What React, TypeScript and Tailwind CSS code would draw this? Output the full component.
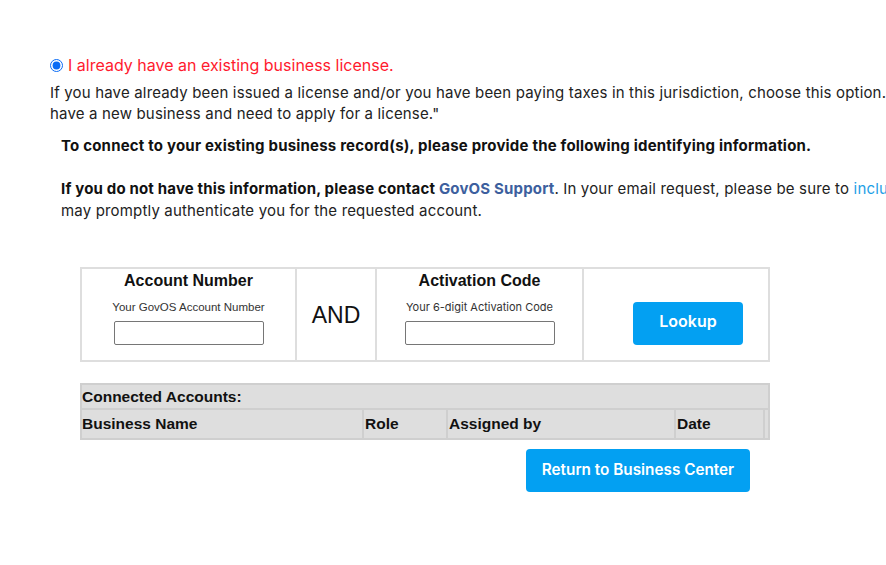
import React from 'react';

const inter = { fontFamily: 'Inter, "Noto Sans", sans-serif' };
const arial = { fontFamily: '"Liberation Sans", Arial, sans-serif' };

export default function App() {
  return (
    <div className="w-[886px] h-[565px] overflow-hidden bg-white text-[#222]" style={inter}>
      <div className="w-[1200px] pt-[55px] pl-[50px]">
        {/* Option radio */}
        <label className="flex items-center gap-[5px] text-[16px] leading-[20px] text-[#ff1a2e]">
          <input type="radio" defaultChecked className="w-[13px] h-[13px] m-0 accent-[#0a6cf5]" />
          <span>I already have an existing business license.</span>
        </label>
        <p className="mt-[7px] text-[15px] leading-[21px] tracking-[0.17px] text-[#222] whitespace-nowrap">
          If you have already been issued a license and/or you have been paying taxes in this jurisdiction, choose this option. If you
          <br />
          have a new business and need to apply for a license."
        </p>

        <div className="pl-[11px] mt-[11px]">
          <p className="text-[15px] leading-[21px] tracking-[0.2px] font-bold text-[#111]">
            To connect to your existing business record(s), please provide the following identifying information.
          </p>
          <p className="mt-[22px] text-[15px] leading-[22px] tracking-[0.17px] text-[#222] whitespace-nowrap">
            <span className="font-bold text-[#111]">If you do not have this information, please contact </span>
            <a className="font-bold text-[#3d5f9e]">GovOS Support</a>. In your email request, please be sure to{' '}
            <a className="text-[#1ea0e6]">include your business name and address</a> so that we
            <br />
            may promptly authenticate you for the requested account.
          </p>
        </div>

        {/* Lookup table */}
        <div className="ml-[30px] mt-[45px] w-[690px] flex border-2 border-[#dedede] h-[95px]">
          <div className="w-[215px] flex flex-col items-center pt-[3px] border-r-2 border-[#dedede]">
            <div className="text-[16px] leading-[18px] font-bold text-[#111]" style={arial}>Account Number</div>
            <div className="mt-[10px] text-[11.5px] leading-[14px] text-[#333]" style={arial}>Your GovOS Account Number</div>
            <input className="mt-[7px] w-[150px] h-[24px] border border-[#767676] rounded-[2px]" />
          </div>
          <div className="w-[80px] flex items-center justify-center border-r-2 border-[#dedede] text-[23px] text-[#111] pt-[2px]" style={arial}>
            AND
          </div>
          <div className="w-[207px] flex flex-col items-center pt-[3px] border-r-2 border-[#dedede]">
            <div className="text-[16px] leading-[18px] font-bold text-[#111]" style={arial}>Activation Code</div>
            <div className="mt-[10px] text-[11px] leading-[14px] text-[#333]">Your 6-digit Activation Code</div>
            <input className="mt-[7px] w-[150px] h-[24px] border border-[#767676] rounded-[2px]" />
          </div>
          <div className="flex-1 flex items-center justify-center pt-[18px] pl-[24px]">
            <button className="w-[110px] h-[43px] pb-[6px] rounded-[4px] bg-[#03a0f2] text-white text-[16px] font-semibold">
              Lookup
            </button>
          </div>
        </div>

        {/* Connected accounts */}
        <div className="ml-[30px] mt-[21px] w-[690px] border-2 border-[#cfcfcf] bg-[#dedede] text-[15.5px] font-bold text-[#111]" style={arial}>
          <div className="h-[23px] leading-[23px]">Connected Accounts:</div>
          <div className="flex h-[30px] border-t-2 border-[#cfcfcf]">
            <div className="w-[282px] leading-[27px] border-r-2 border-[#cfcfcf]">Business Name</div>
            <div className="w-[84px] pl-[1px] leading-[27px] border-r-2 border-[#cfcfcf]">Role</div>
            <div className="w-[228px] pl-[1px] leading-[27px] border-r-2 border-[#cfcfcf]">Assigned by</div>
            <div className="w-[89px] pl-[1px] leading-[27px] border-r-2 border-[#cfcfcf]">Date</div>
            <div className="flex-1"></div>
          </div>
        </div>

        <div className="w-[700px] flex justify-end mt-[9px]">
          <button className="w-[224px] h-[43px] rounded-[4px] bg-[#03a0f2] text-white text-[15.3px] font-semibold">
            Return to Business Center
          </button>
        </div>
      </div>
    </div>
  );
}
